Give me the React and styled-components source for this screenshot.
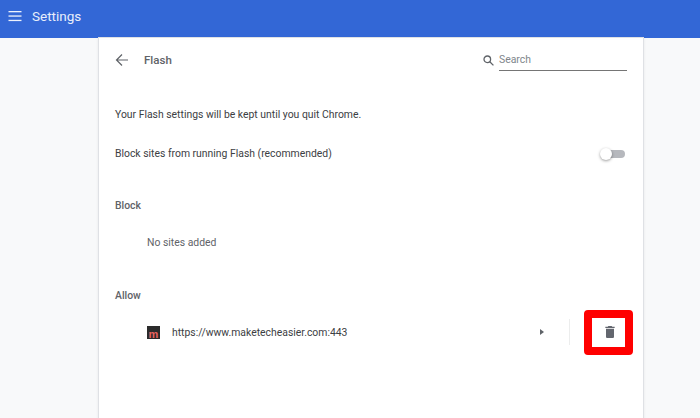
import React from "react";
import styled, { createGlobalStyle } from "styled-components";

const GlobalStyle = createGlobalStyle`
  html, body {
    margin: 0;
    height: 100%;
    overflow: hidden;
    background: #f8f9fa;
    font-family: Roboto, "Liberation Sans", sans-serif;
  }
`;

const Page = styled.div`
  width: 700px;
  height: 418px;
  display: flex;
  flex-direction: column;
  overflow: hidden;
`;

const Header = styled.header`
  height: 38px;
  flex: none;
  box-sizing: border-box;
  background: #3367d6;
  display: flex;
  align-items: center;
  padding: 0 0 6px 8px;
  gap: 10px;
  color: #e8eefb;
`;

const Title = styled.div`
  font-size: 13.5px;
`;

const Main = styled.main`
  flex: 1;
  display: flex;
  padding-left: 99px;
`;

const Card = styled.section`
  width: 544px;
  background: #fff;
  box-shadow: 0 0 0 1px #dfe1e5, 0 1px 3px rgba(60, 64, 67, 0.2);
  display: flex;
  flex-direction: column;
`;

const TopBar = styled.div`
  height: 44px;
  display: flex;
  align-items: center;
  padding: 0 16px;
`;

const BackIcon = styled.svg`
  width: 14px;
  height: 14px;
  color: #5f6368;
`;

const PageName = styled.div`
  margin-left: 15px;
  font-size: 11.5px;
  font-weight: 500;
  color: #5f6368;
  flex: 1;
`;

const SearchBox = styled.div`
  display: flex;
  align-items: center;
  gap: 5px;
`;

const SearchIcon = styled.svg`
  width: 11px;
  height: 11px;
  color: #5f6368;
`;

const SearchField = styled.div`
  width: 128px;
  height: 21px;
  box-sizing: border-box;
  border-bottom: 1px solid #757575;
  font-size: 10.4px;
  line-height: 20px;
  color: #80868b;
`;

const Row = styled.div`
  display: flex;
  align-items: center;
  height: ${(p) => p.$h}px;
  margin-top: ${(p) => p.$mt || 0}px;
  padding-left: ${(p) => p.$pl || 16}px;
  padding-right: 18px;
  font-size: 10.4px;
  color: ${(p) => p.$color || "#3c4043"};
`;

const Heading = styled(Row)`
  font-weight: 500;
  color: #5f6368;
`;

const Toggle = styled.div`
  margin: 1px 0 0 auto;
  width: 19px;
  height: 8px;
  border-radius: 4px;
  background: #b6b8bd;
  position: relative;
`;

const Knob = styled.span`
  position: absolute;
  left: -6px;
  top: -2px;
  width: 12px;
  height: 12px;
  border-radius: 50%;
  background: #fff;
  box-shadow: 0 1px 3px rgba(0, 0, 0, 0.4);
`;

const SiteRow = styled.div`
  height: 44px;
  margin-top: 3px;
  display: flex;
  align-items: center;
  padding-left: 48px;
  font-size: 10.4px;
  color: #3c4043;
`;

const Favicon = styled.div`
  width: 13px;
  height: 13px;
  background: #2b2b2b;
  display: flex;
  align-items: flex-end;
  justify-content: center;
  color: #e8635f;
  font-family: "Liberation Sans", sans-serif;
  font-size: 11px;
  font-weight: 700;
  line-height: 10px;
  margin-right: 12px;
  overflow: hidden;
`;

const SiteUrl = styled.div`
  flex: 1;
`;

const Arrow = styled.div`
  width: 0;
  height: 0;
  border-left: 4px solid #5f6368;
  border-top: 3.5px solid transparent;
  border-bottom: 3.5px solid transparent;
  margin-right: 25px;
`;

const Divider = styled.div`
  width: 1px;
  height: 26px;
  background: #eceded;
  margin-right: 14px;
`;

const DeleteFrame = styled.div`
  width: 49px;
  height: 45px;
  box-sizing: border-box;
  border: 8px solid #ff0000;
  border-radius: 4px;
  display: flex;
  align-items: center;
  justify-content: center;
  padding-left: 3px;
  margin-right: 10px;
`;

const TrashIcon = styled.svg`
  width: 16px;
  height: 16px;
  color: #63666e;
`;

export default function App() {
  return (
    <Page>
      <GlobalStyle />
      <Header>
        <svg width="14" height="14" viewBox="0 0 14 14" fill="#eef2fc">
          <rect x="0.5" y="2" width="13" height="1.3" />
          <rect x="0.5" y="6.4" width="13" height="1.3" />
          <rect x="0.5" y="10.8" width="13" height="1.3" />
        </svg>
        <Title>Settings</Title>
      </Header>
      <Main>
        <Card>
          <TopBar>
            <BackIcon viewBox="0 0 14 14" fill="none" stroke="currentColor" strokeWidth="1.2">
              <path d="M13 7H1.5M7 1.5 1.5 7 7 12.5" />
            </BackIcon>
            <PageName>Flash</PageName>
            <SearchBox>
              <SearchIcon viewBox="0 0 11 11" fill="none" stroke="currentColor" strokeWidth="1.3">
                <circle cx="4.3" cy="4.3" r="3.3" />
                <path d="M6.8 6.8 10.4 10.4" />
              </SearchIcon>
              <SearchField>Search</SearchField>
            </SearchBox>
          </TopBar>
          <Row $h={24} $mt={20}>Your Flash settings will be kept until you quit Chrome.</Row>
          <Row $h={24} $mt={15}>
            Block sites from running Flash (recommended)
            <Toggle>
              <Knob />
            </Toggle>
          </Row>
          <Heading $h={24} $mt={28}>Block</Heading>
          <Row $h={24} $mt={13} $pl={48} $color="#5f6368">No sites added</Row>
          <Heading $h={24} $mt={29}>Allow</Heading>
          <SiteRow>
            <Favicon>m</Favicon>
            <SiteUrl>https://www.maketecheasier.com:443</SiteUrl>
            <Arrow />
            <Divider />
            <DeleteFrame>
              <TrashIcon viewBox="0 0 24 24" fill="currentColor">
                <path d="M6 19c0 1.1.9 2 2 2h8c1.100 0 2-.9 2-2V7H6v12zM19 4h-3.500l-1-1h-5l-1 1H5v2h14V4z" />
              </TrashIcon>
            </DeleteFrame>
          </SiteRow>
        </Card>
      </Main>
    </Page>
  );
}
